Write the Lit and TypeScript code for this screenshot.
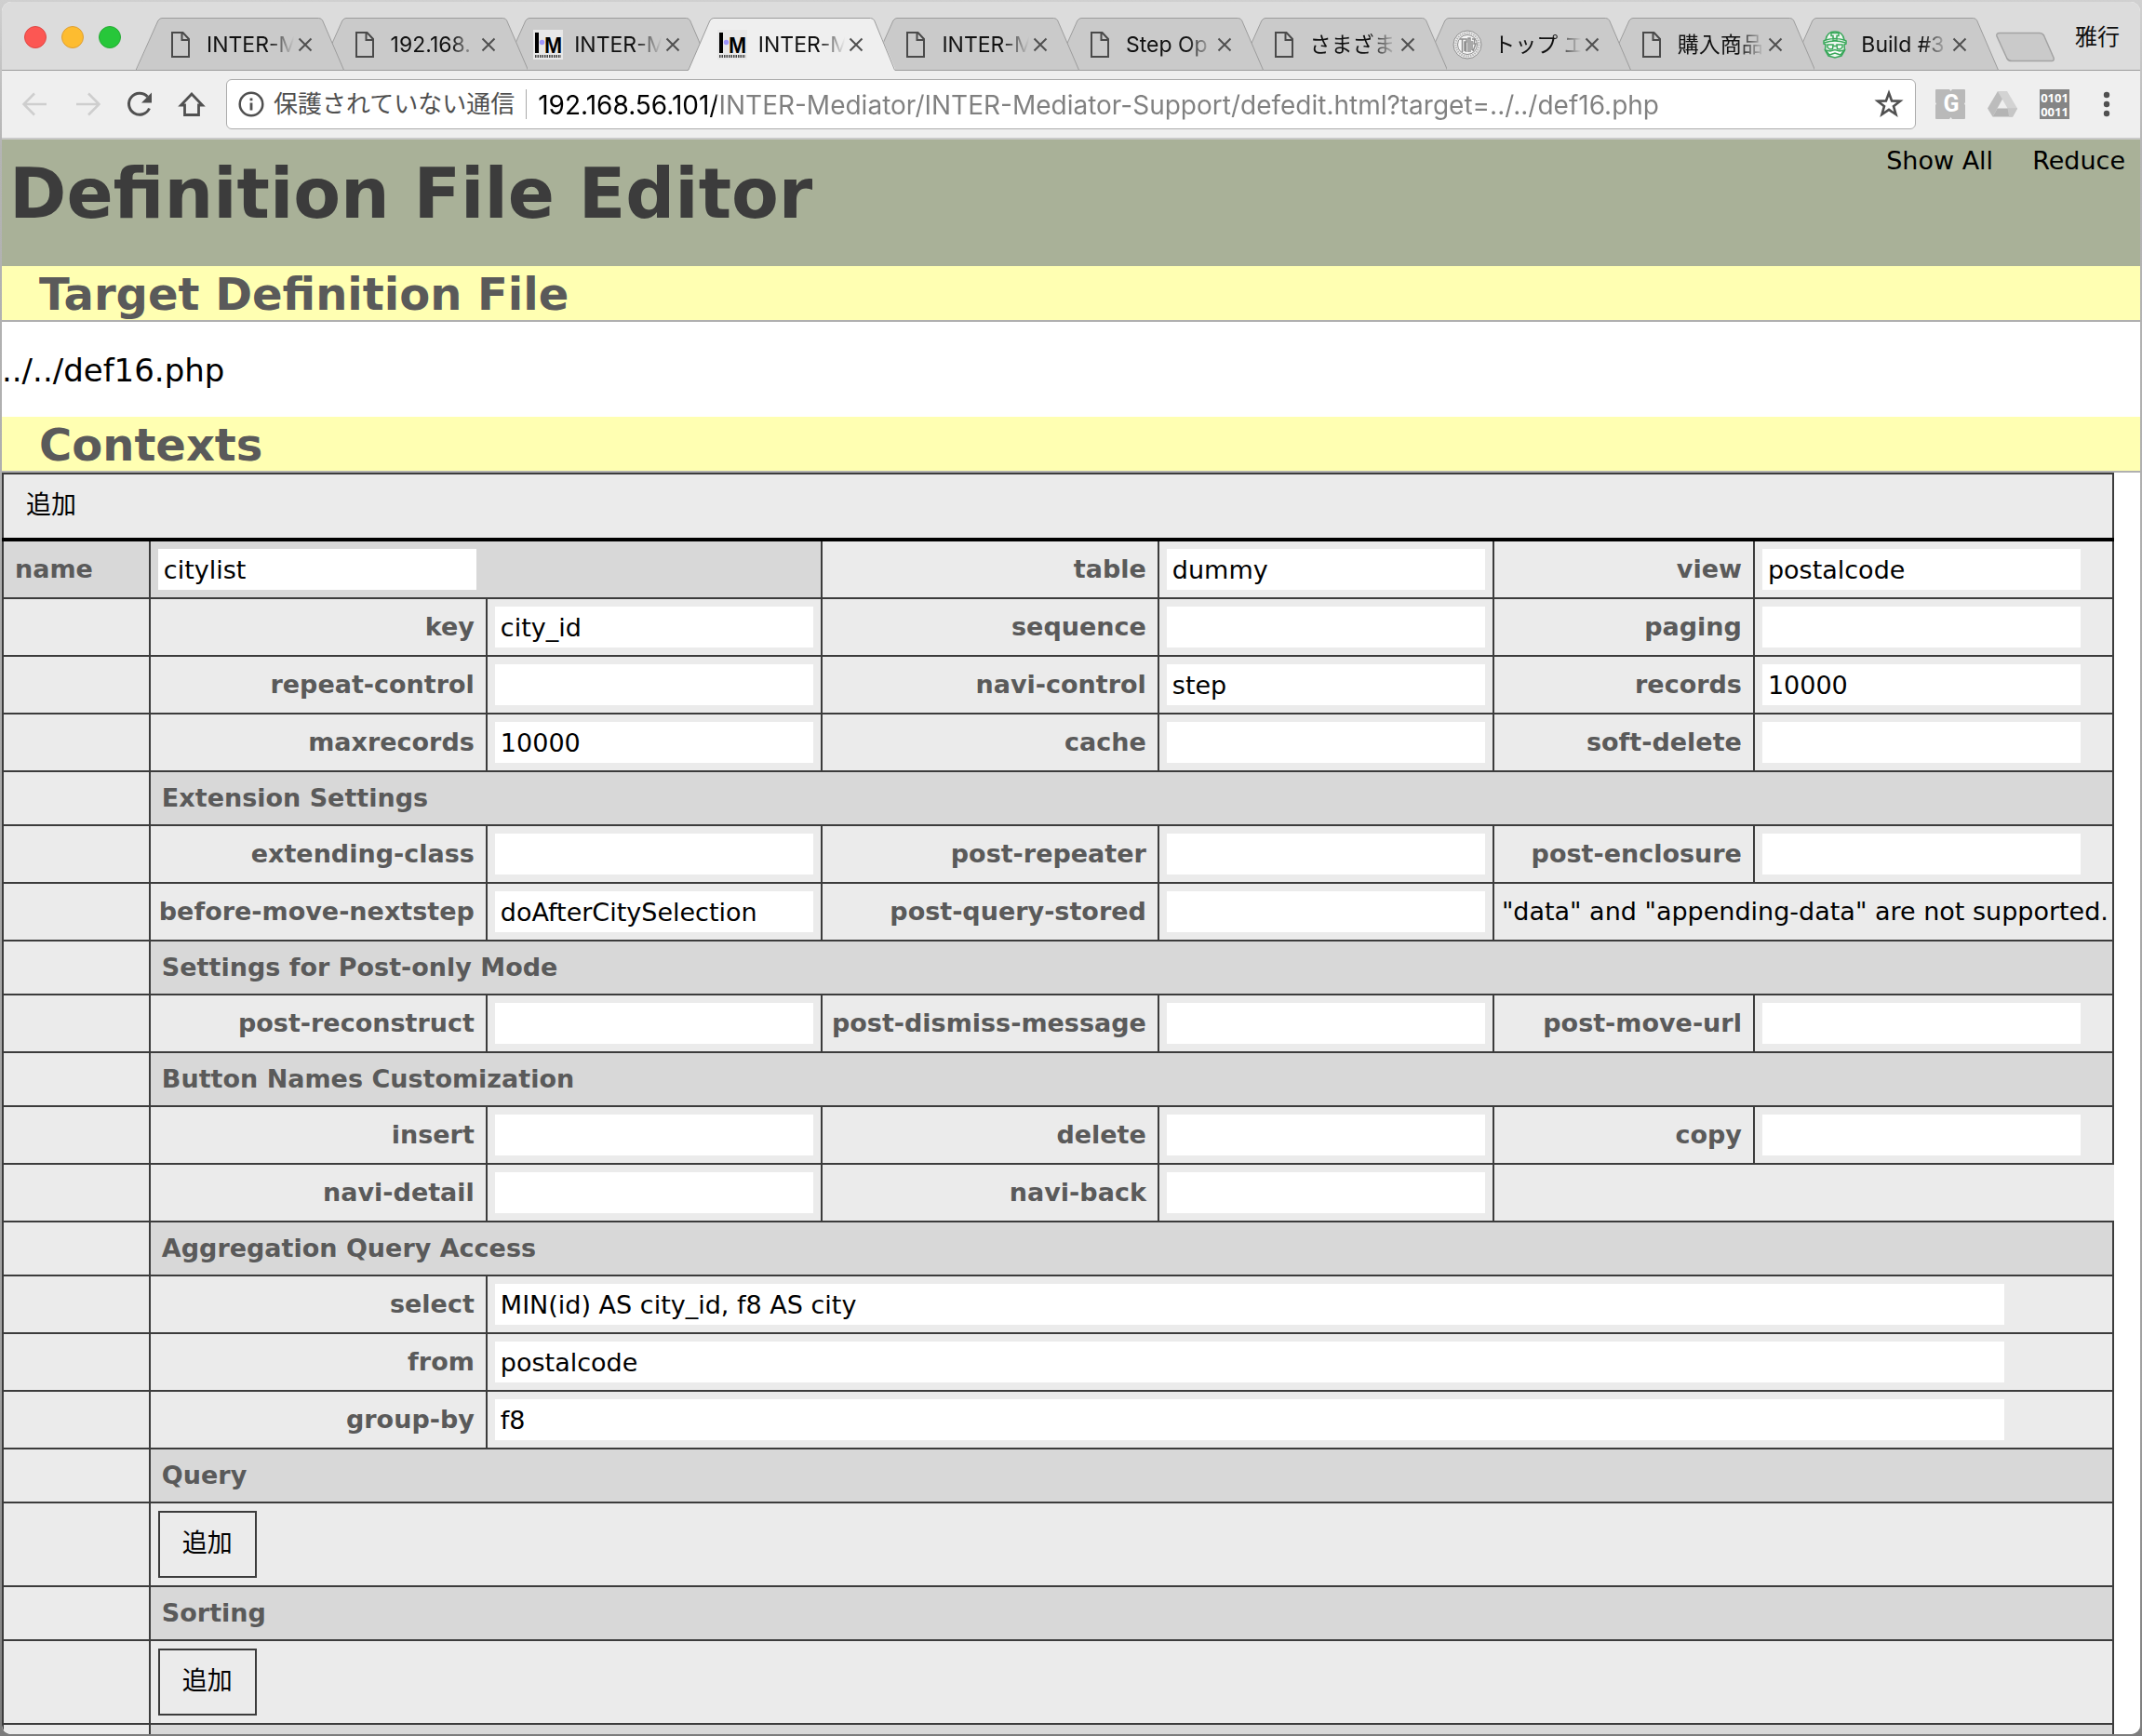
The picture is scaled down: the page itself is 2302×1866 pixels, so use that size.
import { LitElement, html, svg, css, nothing, TemplateResult } from "lit";
import { customElement, property } from "lit/decorators.js";

type TabIcon = "file" | "im" | "seal" | "travis";

interface Tab {
  title: string;
  icon: TabIcon;
  active?: boolean;
}

const TABS: Tab[] = [
  { title: "INTER-M", icon: "file" },
  { title: "192.168.", icon: "file" },
  { title: "INTER-M", icon: "im" },
  { title: "INTER-M", icon: "im", active: true },
  { title: "INTER-M", icon: "file" },
  { title: "Step Op", icon: "file" },
  { title: "さまざま", icon: "file" },
  { title: "トップ エ", icon: "seal" },
  { title: "購入商品", icon: "file" },
  { title: "Build #3", icon: "travis" },
];

const ADDRESS =
  "192.168.56.101/INTER-Mediator/INTER-Mediator-Support/defedit.html?target=../../def16.php";

interface Field {
  label: string;
  value?: string;
}

type Row =
  | { kind: "fields"; fields: Field[]; note?: string }
  | { kind: "section"; title: string }
  | { kind: "wide"; field: Field }
  | { kind: "add"; of: string };

const ROWS: Row[] = [
  { kind: "fields", fields: [{ label: "key", value: "city_id" }, { label: "sequence" }, { label: "paging" }] },
  {
    kind: "fields",
    fields: [{ label: "repeat-control" }, { label: "navi-control", value: "step" }, { label: "records", value: "10000" }],
  },
  { kind: "fields", fields: [{ label: "maxrecords", value: "10000" }, { label: "cache" }, { label: "soft-delete" }] },
  { kind: "section", title: "Extension Settings" },
  { kind: "fields", fields: [{ label: "extending-class" }, { label: "post-repeater" }, { label: "post-enclosure" }] },
  {
    kind: "fields",
    fields: [{ label: "before-move-nextstep", value: "doAfterCitySelection" }, { label: "post-query-stored" }],
    note: '"data" and "appending-data" are not supported.',
  },
  { kind: "section", title: "Settings for Post-only Mode" },
  {
    kind: "fields",
    fields: [{ label: "post-reconstruct" }, { label: "post-dismiss-message" }, { label: "post-move-url" }],
  },
  { kind: "section", title: "Button Names Customization" },
  { kind: "fields", fields: [{ label: "insert" }, { label: "delete" }, { label: "copy" }] },
  { kind: "fields", fields: [{ label: "navi-detail" }, { label: "navi-back" }] },
  { kind: "section", title: "Aggregation Query Access" },
  { kind: "wide", field: { label: "select", value: "MIN(id) AS city_id, f8 AS city" } },
  { kind: "wide", field: { label: "from", value: "postalcode" } },
  { kind: "wide", field: { label: "group-by", value: "f8" } },
  { kind: "section", title: "Query" },
  { kind: "add", of: "query" },
  { kind: "section", title: "Sorting" },
  { kind: "add", of: "sorting" },
  { kind: "section", title: "" },
];

const icon = (w: number, h: number, body: TemplateResult<2>) => html`
  <svg width=${w} height=${h} viewBox="0 0 ${w} ${h}" fill="none" aria-hidden="true">${body}</svg>
`;

const TAB_ICONS: Record<TabIcon, TemplateResult<2>> = {
  file: svg`
    <path d="M7 3h11.500l6.500 7v19H7z M17.500 3.500v7.500h7.500" stroke="#4a4a4a" stroke-width="2"/>`,
  im: svg`
    <rect width="32" height="32" fill="#e8e8e8"/>
    <rect x="2" y="3" width="4" height="22" fill="#000"/>
    <circle cx="9.500" cy="13.500" r="2.700" fill="#9d95fa"/>
    <text x="12" y="25" font-family="Liberation Sans" font-weight="700" font-size="23" fill="#000">M</text>
    <path d="M2 28.500H30" stroke="#444" stroke-width="3" stroke-dasharray="1.500 1"/>`,
  seal: svg`
    <circle cx="16" cy="16" r="15" fill="#efefef" stroke="#8d8d8d" stroke-width="1"/>
    <circle cx="16" cy="16" r="12.500" stroke="#b4b4b4" stroke-width="2" stroke-dasharray="1.500 1"/>
    <circle cx="16" cy="16" r="10.500" fill="#f5f5f5" stroke="#8d8d8d" stroke-width="1"/>
    <path d="M8 10h7v3h-2v10 M10.500 10v14 M17 24V9l2 0v15 M21 10h3l-1 5h2l-3 8 M21 12v10 M14.500 13v11" stroke="#8f8f8f" stroke-width="1.500"/>`,
  travis: svg`
    <path d="M6 11C7 5 11 2 16 2s9 3 10 9l2 1v3l-2 1 .500 6-3.500 6-7 2-7-2-3.500-6L6 16l-2-1v-3z" fill="#f1f8f3" stroke="#3aa85b" stroke-width="1.500"/>
    <path d="M4.500 14Q16 10 27.500 14 M6 11Q16 8 26 11 M12 3.500h8v3h-2v5h-4v-5h-2z" stroke="#3aa85b" stroke-width="1.500"/>
    <path d="M8 16h6l-.500 4.500-3 .500-2.500-2z M24 16h-6l.500 4.500 3 .500 2.500-2z M14 17.500h4 M15 22h2" stroke="#3aa85b" stroke-width="1.500"/>
    <path d="M6 22l5 1 5-1.500 5 1.500 5-1-4 5-6-2-6 2z" fill="#fff" stroke="#3aa85b" stroke-width="1.500"/>`,
};

@customElement("browser-tab")
class BrowserTab extends LitElement {
  @property() label = "";
  @property() icon: TabIcon = "file";
  @property({ type: Boolean, reflect: true }) active = false;

  static styles = css`
    :host {
      position: relative;
      display: flex;
      align-items: center;
      flex: 0 1 224px;
      min-width: 120px;
      height: 57px;
      box-sizing: border-box;
      padding: 0 30px 0 32px;
      margin-right: -26px;
    }
    .shape {
      position: absolute;
      inset: 0;
      width: 100%;
      height: 100%;
    }
    button {
      border: 0;
      padding: 0;
      background: none;
      color: #111;
      cursor: pointer;
    }
    .select {
      position: relative;
      display: flex;
      align-items: center;
      gap: 12px;
      flex: 1;
      min-width: 0;
      height: 57px;
      font: 23px/32px Inter, "Noto Sans CJK JP", sans-serif;
    }
    .select svg {
      flex: none;
    }
    .title {
      flex: 1;
      min-width: 0;
      overflow: hidden;
      white-space: nowrap;
      text-align: left;
      mask-image: linear-gradient(to right, #000 calc(100% - 28px), transparent);
    }
    .close {
      position: relative;
      display: flex;
      padding: 4px;
    }
  `;

  render() {
    return html`
      <svg class="shape" viewBox="0 0 224 57" preserveAspectRatio="none" aria-hidden="true">
        <path d="M0 57L1 56 24 3Q26 .500 28 .500H197Q199.500 .500 201 3L224 56V57Z" fill=${this.active ? "#efefef" : "#cacaca"} />
        <path
          d=${this.active
            ? "M0 56.500L1 56 24 3Q26 .500 28 .500H197Q199.500 .500 201 3L223 56.500"
            : "M0 56.500L24 3Q26 .500 28 .500H197Q199.500 .500 201 3L224 56.500Z"}
          fill="none"
          stroke="#9c9c9c"
        />
      </svg>
      <button class="select" role="tab" aria-selected=${this.active ? "true" : "false"}>
        ${icon(32, 32, TAB_ICONS[this.icon])}
        <span class="title">${this.label}</span>
      </button>
      <button class="close" aria-label="Close tab">
        ${icon(16, 16, svg`<path d="M1.500 1.500l13 13M14.500 1.500l-13 13" stroke="#505050" stroke-width="2"/>`)}
      </button>
    `;
  }
}

@customElement("browser-chrome")
class BrowserChrome extends LitElement {
  static styles = css`
    :host {
      display: block;
      font-family: Roboto, "Noto Sans CJK JP", sans-serif;
    }
    button {
      display: flex;
      border: 0;
      padding: 0;
      background: none;
      font: inherit;
      cursor: pointer;
    }
    .strip {
      display: flex;
      height: 74px;
      background: linear-gradient(#9c9c9c, #9c9c9c) bottom / 100% 1px no-repeat, #dcdcdc;
    }
    .lights {
      flex: none;
      box-sizing: border-box;
      width: 144px;
      display: flex;
      gap: 16px;
      padding: 26px 0 0 24px;
    }
    .light {
      box-sizing: border-box;
      width: 24px;
      height: 24px;
      border-radius: 50%;
    }
    .red {
      background: #fc5753;
      border: 1px solid #df4744;
    }
    .yellow {
      background: #fdbc30;
      border: 1px solid #de9f34;
    }
    .green {
      background: #27c73a;
      border: 1px solid #27aa35;
    }
    .tabs {
      display: flex;
      flex: 0 1 1976px;
      min-width: 0;
      align-items: flex-end;
    }
    .new {
      flex: none;
      margin: 32px 0 0 22px;
      height: 34px;
    }
    .user {
      flex: none;
      margin-left: auto;
      padding: 20px 22px 0 0;
      font-size: 24px;
      line-height: 36px;
      height: 56px;
      box-sizing: border-box;
      white-space: nowrap;
      color: #111;
    }
    .bar {
      display: flex;
      align-items: center;
      box-sizing: border-box;
      height: 74px;
      padding: 0 20px;
      background: #efefef;
      border-bottom: 2px solid #c9c9c9;
    }
    .nav {
      display: flex;
      gap: 24px;
      margin-right: 21px;
    }
    .omnibox {
      display: flex;
      align-items: center;
      flex: 1;
      min-width: 0;
      box-sizing: border-box;
      height: 54px;
      padding: 0 12px;
      background: #fff;
      border: 1px solid #acacac;
      border-radius: 6px;
    }
    .security {
      gap: 10px;
      align-items: center;
      flex: none;
      font-size: 26px;
      line-height: 36px;
      color: #4f4f4f;
    }
    .divider {
      flex: none;
      width: 1px;
      height: 32px;
      margin: 0 12px;
      background: #aaa;
    }
    .address {
      flex: 1;
      min-width: 0;
      border: 0;
      padding: 2px 0 0;
      box-sizing: border-box;
      outline: 0;
      height: 46px;
      font: 28px/44px Inter, Roboto, sans-serif;
      color: #808080;
      background: linear-gradient(to right, #000 192px, #808080 192px);
      -webkit-background-clip: text;
      background-clip: text;
      -webkit-text-fill-color: transparent;
    }
    .extensions {
      display: flex;
      gap: 24px;
      margin-left: 21px;
    }
  `;

  render() {
    return html`
      <div class="strip">
        <div class="lights">
          <button class="light red" aria-label="Close window"></button>
          <button class="light yellow" aria-label="Minimize window"></button>
          <button class="light green" aria-label="Zoom window"></button>
        </div>
        <div class="tabs" role="tablist">
          ${TABS.map(
            (t, i) => html`<browser-tab
              style="z-index:${t.active ? TABS.length + 1 : TABS.length - i}"
              .label=${t.title}
              .icon=${t.icon}
              ?active=${!!t.active}
            ></browser-tab>`
          )}
        </div>
        <button class="new" aria-label="New tab">
          ${icon(66, 34, svg`<path d="M5 1.500H48Q51 1.500 52.500 4L63 28Q64 31.500 61 31.500H18Q14.500 31.500 13 29L2 5Q1 1.500 5 1.500Z" fill="#cacaca" stroke="#a3a3a3" stroke-width="1.500"/>`)}
        </button>
        <button class="user">雅行</button>
      </div>
      <div class="bar">
        <div class="nav">
          <button aria-label="Back">${icon(32, 32, svg`<path d="M28 16H4M15 4.500L3.500 16 15 27.500" stroke="#cecece" stroke-width="2.500"/>`)}</button>
          <button aria-label="Forward">${icon(32, 32, svg`<path d="M4 16H28M17 4.500L28.500 16 17 27.500" stroke="#cecece" stroke-width="2.500"/>`)}</button>
          <button aria-label="Reload">
            ${icon(32, 32, svg`<path d="M26.500 20.500A11.500 11.500 0 1 1 24.500 8" stroke="#505050" stroke-width="3"/><path d="M29 3.500V14.500H18Z" fill="#505050"/>`)}
          </button>
          <button aria-label="Home">
            ${icon(32, 32, svg`<path d="M16 5L4.500 17H8.500V27.500H23.500V17H27.500Z" stroke="#505050" stroke-width="2.800"/>`)}
          </button>
        </div>
        <div class="omnibox">
          <button class="security">
            ${icon(28, 28, svg`<circle cx="14" cy="14" r="12.300" stroke="#505050" stroke-width="2.500"/><path d="M14 12.500V20.500M14 7.500V10.300" stroke="#505050" stroke-width="2.800"/>`)}
            <span>保護されていない通信</span>
          </button>
          <span class="divider"></span>
          <input class="address" type="text" aria-label="Address" spellcheck="false" .value=${ADDRESS} />
          <button aria-label="Bookmark this page">
            ${icon(32, 32, svg`<path d="M16 4L19.100 12.400 28 12.700 21 18.200 23.500 27 16 21.900 8.500 27 11 18.200 4 12.700 12.900 12.400Z" stroke="#505050" stroke-width="2.600"/>`)}
          </button>
        </div>
        <div class="extensions">
          <button aria-label="Extension G">
            ${icon(32, 32, svg`<rect width="32" height="32" rx="1" fill="#b9b9b9"/><path d="M15 0h3l-1.500 2zM15 32h3l-1.500-2zM0 14v3l1-1.500zM32 14v3l-1-1.500z" fill="#efefef"/>
              <text x="17" y="24" text-anchor="middle" font-family="Roboto" font-weight="700" font-size="25" fill="#fff">G</text>`)}
          </button>
          <button aria-label="Drive">
            ${icon(32, 32, svg`<path d="M11 2H21L32 20.500H21.500Z" fill="#d3d3d3"/><path d="M11 2L16 10.500 5.500 29.500 0 20.500Z" fill="#bcbcbc"/><path d="M10.500 20.500H32L27 29.500H5.500Z" fill="#b4b4b4"/><path d="M21.500 20.500H32L27 29.500H23Z" fill="#c6c6c6"/>`)}
          </button>
          <button aria-label="Binary tool">
            ${icon(32, 32, svg`<rect width="32" height="32" fill="#858585"/>
              <text x="16" y="14" text-anchor="middle" font-family="Noto Sans" font-weight="700" font-size="13" fill="#fff">0101</text>
              <text x="16" y="28.500" text-anchor="middle" font-family="Noto Sans" font-weight="700" font-size="13" fill="#fff">0011</text>`)}
          </button>
          <button aria-label="Menu">
            ${icon(32, 32, svg`<circle cx="16" cy="6" r="3.200" fill="#505050"/><circle cx="16" cy="16" r="3.200" fill="#505050"/><circle cx="16" cy="26" r="3.200" fill="#505050"/>`)}
          </button>
        </div>
      </div>
    `;
  }
}

@customElement("definition-editor")
class DefinitionEditor extends LitElement {
  static styles = css`
    :host {
      display: block;
      background: #fff;
      color: #000;
      font-family: "DejaVu Sans", "Noto Sans CJK JP", sans-serif;
      font-size: 27px;
      line-height: 32px;
    }
    .header {
      display: flex;
      justify-content: space-between;
      align-items: flex-start;
      box-sizing: border-box;
      min-height: 136px;
      background: #a9b198;
    }
    h1 {
      margin: 0;
      padding: 15px 0 0 8px;
      font-size: 74px;
      line-height: 86px;
      color: #3c3c3c;
    }
    .links {
      display: flex;
      gap: 42px;
      padding: 7px 16px 0 0;
    }
    .links a {
      color: #000;
      text-decoration: none;
    }
    h2 {
      margin: 0;
      padding: 2px 0 0 40px;
      font-size: 48px;
      line-height: 56px;
      color: #5a5a5a;
      background: #ffffb2;
      border-bottom: 2px solid #b0b0b0;
    }
    .target {
      margin: 0;
      padding: 33px 0 31px;
      font-size: 34px;
      line-height: 38px;
    }
    table {
      width: calc(100% - 28px);
      border-collapse: collapse;
      background: #ebebeb;
    }
    .c-name {
      width: 158px;
    }
    .c-label {
      width: 362px;
    }
    .c-field {
      width: 361px;
    }
    .c-label3 {
      width: 280px;
    }
    .c-field3 {
      width: 386px;
    }
    th,
    td {
      box-sizing: border-box;
      padding: 8px;
      border: 2px solid #3c3c3c;
      text-align: left;
      white-space: nowrap;
    }
    th {
      padding: 0 12px;
      color: #5a5a5a;
    }
    .label {
      padding-left: 4px;
      text-align: right;
    }
    .note {
      padding-right: 4px;
    }
    .shade {
      background: #d8d8d8;
    }
    .section {
      height: 58px;
    }
    .top {
      padding: 0;
      border-bottom: 4px solid #000;
    }
    input {
      display: block;
      box-sizing: border-box;
      width: 100%;
      max-width: 342px;
      height: 44px;
      border: 0;
      border-radius: 0;
      padding: 0 6px;
      outline: 0;
      background: #fff;
      color: #000;
      font: inherit;
    }
    input.wide {
      max-width: 1622px;
    }
    button {
      display: block;
      height: 72px;
      border: 2px solid #3c3c3c;
      padding: 0 24px 6px;
      background: none;
      color: #000;
      font: 27px/32px "Noto Sans CJK JP", sans-serif;
      cursor: pointer;
    }
    .top button {
      height: 68px;
      border: 0;
    }
  `;

  private field(f: Field) {
    return html`
      <th class="label" scope="row"><label for=${f.label}>${f.label}</label></th>
      <td><input id=${f.label} type="text" .value=${f.value ?? ""} /></td>
    `;
  }

  private row(r: Row) {
    switch (r.kind) {
      case "fields":
        return html`<tr>
          <td></td>
          ${r.fields.map((f) => this.field(f))} ${r.note ? html`<td class="note" colspan="2">${r.note}</td>` : nothing}
        </tr>`;
      case "section":
        return html`<tr class="section">
          <td></td>
          <th class="shade" colspan="6" scope="colgroup">${r.title}</th>
        </tr>`;
      case "wide":
        return html`<tr>
          <td></td>
          <th class="label" scope="row"><label for=${r.field.label}>${r.field.label}</label></th>
          <td colspan="5"><input class="wide" id=${r.field.label} type="text" .value=${r.field.value ?? ""} /></td>
        </tr>`;
      case "add":
        return html`<tr>
          <td></td>
          <td colspan="6"><button aria-label="追加 ${r.of}">追加</button></td>
        </tr>`;
    }
  }

  render() {
    return html`
      <div class="header">
        <h1>Definition File Editor</h1>
        <div class="links"><a href="#all">Show All</a><a href="#reduce">Reduce</a></div>
      </div>
      <h2>Target Definition File</h2>
      <p class="target">../../def16.php</p>
      <h2>Contexts</h2>
      <table>
        <colgroup>
          <col class="c-name" />
          <col class="c-label" />
          <col class="c-field" />
          <col class="c-label" />
          <col class="c-field" />
          <col class="c-label3" />
          <col class="c-field3" />
        </colgroup>
        <tbody>
          <tr>
            <td class="top" colspan="7"><button>追加</button></td>
          </tr>
          <tr>
            <th class="shade" scope="row"><label for="name">name</label></th>
            <td class="shade" colspan="2"><input id="name" type="text" .value=${"citylist"} /></td>
            ${this.field({ label: "table", value: "dummy" })} ${this.field({ label: "view", value: "postalcode" })}
          </tr>
          ${ROWS.map((r) => this.row(r))}
        </tbody>
      </table>
    `;
  }
}

@customElement("app-root")
class AppRoot extends LitElement {
  static styles = css`
    :host {
      display: block;
      box-sizing: border-box;
      height: 100vh;
      padding: 2px;
      overflow: hidden;
      background: linear-gradient(#d0d0d0, #b4b4b4 160px, #a0a0a0 80%, #7c7c7c);
    }
    .window {
      display: flex;
      flex-direction: column;
      height: 100%;
      overflow: hidden;
      border-radius: 10px;
      background: #fff;
    }
    .page {
      flex: 1;
      min-height: 0;
      overflow: hidden;
    }
  `;

  render() {
    return html`
      <div class="window">
        <browser-chrome></browser-chrome>
        <div class="page"><definition-editor></definition-editor></div>
      </div>
    `;
  }
}
